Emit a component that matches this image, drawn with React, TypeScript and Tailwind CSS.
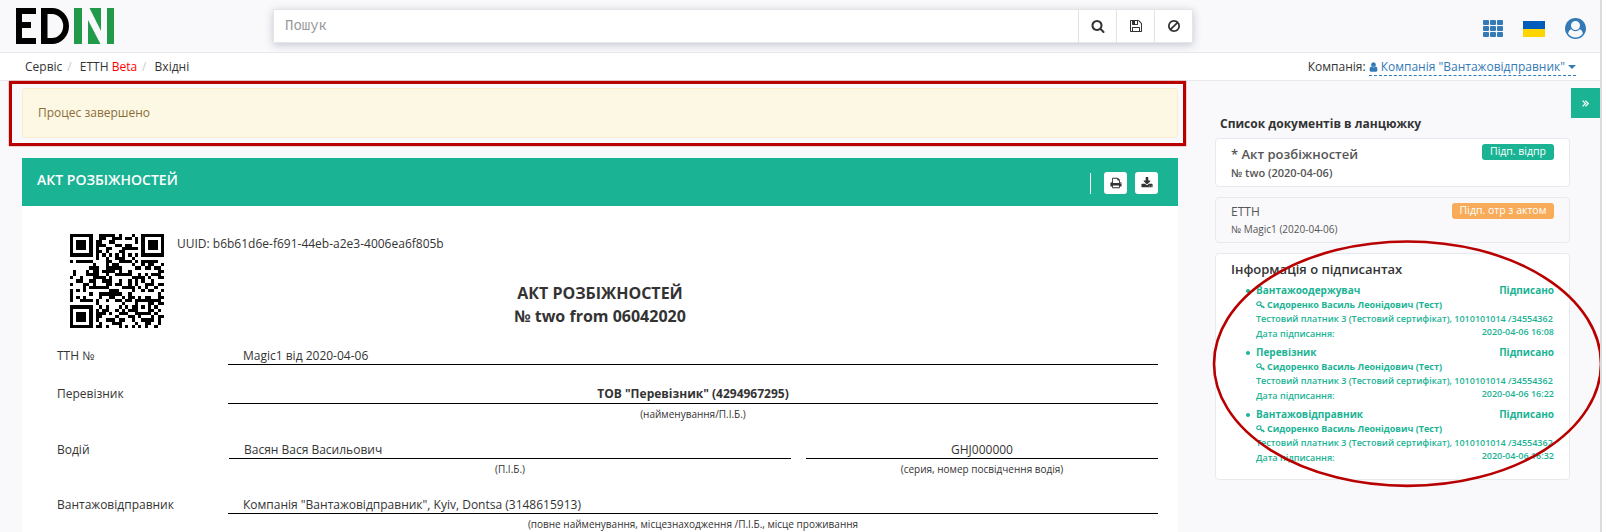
import React from "react";

/* ---------- QR code (version 3, level M, mask 2) ---------- */

const QR_SIZE = 29;
const DATA_WORDS = 44;
const EC_WORDS = 26;

function gfMultiply(a: number, b: number): number {
  let r = 0;
  for (let i = 7; i >= 0; i--) {
    r = (r << 1) ^ ((r >>> 7) * 0x11d);
    r ^= ((b >>> i) & 1) * a;
  }
  return r;
}

function errorWords(data: number[]): number[] {
  const divisor: number[] = new Array(EC_WORDS).fill(0);
  divisor[EC_WORDS - 1] = 1;
  let root = 1;
  for (let i = 0; i < EC_WORDS; i++) {
    for (let j = 0; j < EC_WORDS; j++) {
      divisor[j] = gfMultiply(divisor[j], root);
      if (j + 1 < EC_WORDS) divisor[j] ^= divisor[j + 1];
    }
    root = gfMultiply(root, 2);
  }
  const rest: number[] = new Array(EC_WORDS).fill(0);
  for (const b of data) {
    const factor = b ^ (rest.shift() as number);
    rest.push(0);
    divisor.forEach((c, i) => (rest[i] ^= gfMultiply(c, factor)));
  }
  return rest;
}

function buildQr(text: string): boolean[][] {
  const bits: number[] = [];
  const put = (v: number, n: number) => {
    for (let i = n - 1; i >= 0; i--) bits.push((v >>> i) & 1);
  };
  put(4, 4);
  put(text.length, 8);
  for (const ch of text) put(ch.charCodeAt(0), 8);
  put(0, 4);
  const words: number[] = [];
  for (let i = 0; i < bits.length; i += 8) words.push(parseInt(bits.slice(i, i + 8).join(""), 2));
  for (let pad = 0xec; words.length < DATA_WORDS; pad ^= 0xec ^ 0x11) words.push(pad);
  const all = words.concat(errorWords(words));

  const m = Array.from({ length: QR_SIZE }, () => new Array<boolean>(QR_SIZE).fill(false));
  const fixed = Array.from({ length: QR_SIZE }, () => new Array<boolean>(QR_SIZE).fill(false));
  const set = (r: number, c: number, v: boolean) => {
    if (r < 0 || c < 0 || r >= QR_SIZE || c >= QR_SIZE) return;
    m[r][c] = v;
    fixed[r][c] = true;
  };
  for (let i = 0; i < QR_SIZE; i++) {
    set(6, i, i % 2 === 0);
    set(i, 6, i % 2 === 0);
  }
  for (const [r, c] of [[3, 3], [3, QR_SIZE - 4], [QR_SIZE - 4, 3]]) {
    for (let dy = -4; dy <= 4; dy++)
      for (let dx = -4; dx <= 4; dx++) {
        const d = Math.max(Math.abs(dx), Math.abs(dy));
        set(r + dy, c + dx, d !== 2 && d !== 4);
      }
  }
  for (let dy = -2; dy <= 2; dy++)
    for (let dx = -2; dx <= 2; dx++) set(22 + dy, 22 + dx, Math.max(Math.abs(dx), Math.abs(dy)) !== 1);

  const format = 0b101111001111100;
  const bit = (i: number) => ((format >>> i) & 1) === 1;
  for (let i = 0; i <= 5; i++) set(i, 8, bit(i));
  set(7, 8, bit(6));
  set(8, 8, bit(7));
  set(8, 7, bit(8));
  for (let i = 9; i < 15; i++) set(8, 14 - i, bit(i));
  for (let i = 0; i < 8; i++) set(8, QR_SIZE - 1 - i, bit(i));
  for (let i = 8; i < 15; i++) set(QR_SIZE - 15 + i, 8, bit(i));
  set(QR_SIZE - 8, 8, true);

  let k = 0;
  for (let right = QR_SIZE - 1; right >= 1; right -= 2) {
    if (right === 6) right = 5;
    for (let v = 0; v < QR_SIZE; v++)
      for (let j = 0; j < 2; j++) {
        const c = right - j;
        const up = ((right + 1) & 2) === 0;
        const r = up ? QR_SIZE - 1 - v : v;
        if (fixed[r][c]) continue;
        const dark = k < all.length * 8 && ((all[k >>> 3] >>> (7 - (k & 7))) & 1) === 1;
        k++;
        m[r][c] = dark !== (c % 3 === 0);
      }
  }
  return m;
}

const UUID = "b6b61d6e-f691-44eb-a2e3-4006ea6f805b";

function QrCode() {
  const d = buildQr(UUID)
    .map((row, r) => row.map((on, c) => (on ? `M${c} ${r}h1v1h-1z` : "")).join(""))
    .join("");
  return (
    <svg className="h-[94px] w-[94px] shrink-0" viewBox="0 0 29 29" shapeRendering="crispEdges">
      <path d={d} />
    </svg>
  );
}

/* ---------- Icons ---------- */

const ICONS = {
  search:
    "M1216 832q0-185-131.5-316.5t-316.5-131.5-316.5 131.5-131.5 316.5 131.5 316.5 316.5 131.5 316.5-131.5 131.5-316.5zm512 832q0 52-38 90t-90 38q-54 0-90-38l-343-342q-179 124-399 124-143 0-273.5-55.5t-225-150-150-225-55.5-273.5 55.5-273.5 150-225 225-150 273.5-55.5 273.5 55.5 225 150 150 225 55.5 273.5q0 220-124 399l343 343q37 37 37 90z",
  save:
    "M512 1536h768v-384h-768v384zm896 0h128v-896q0-14-10-38.5t-20-34.5l-281-281q-10-10-34-20t-39-10v416q0 40-28 68t-68 28h-576q-40 0-68-28t-28-68v-416h-128v1280h128v-416q0-40 28-68t68-28h832q40 0 68 28t28 68v416zm-384-928v-320q0-13-9.5-22.5t-22.5-9.5h-192q-13 0-22.5 9.5t-9.5 22.5v320q0 13 9.5 22.5t22.5 9.5h192q13 0 22.5-9.5t9.5-22.5zm640 32v928q0 40-28 68t-68 28h-1344q-40 0-68-28t-28-68v-1344q0-40 28-68t68-28h928q40 0 88 20t76 48l280 280q28 28 48 76t20 88z",
  ban:
    "M1440 893q0-161-87-295l-754 753q137 89 297 89 111 0 211.5-43.5t173.5-116.5 116-174.5 43-212.5zm-999 299l755-754q-135-91-300-91-148 0-273 73t-198 199-73 274q0 162 89 299zm1223-299q0 157-61 300t-163.5 246-245 164-298.5 61-298.5-61-245-164-163.5-246-61-300 61-299.5 163.5-245.5 245-164 298.5-61 298.5 61 245 164 163.5 245.5 61 299.5z",
  print:
    "M448 1536h896v-256h-896v256zm0-640h896v-384h-160q-40 0-68-28t-28-68v-160h-640v640zm1152 64q0-26-19-45t-45-19-45 19-19 45 19 45 45 19 45-19 19-45zm128 0v416q0 13-9.5 22.5t-22.5 9.5h-224v160q0 40-28 68t-68 28h-960q-40 0-68-28t-28-68v-160h-224q-13 0-22.5-9.5t-9.5-22.5v-416q0-79 56.5-135.5t135.5-56.5h64v-544q0-40 28-68t68-28h672q40 0 88 20t76 48l152 152q28 28 48 76t20 88v256h64q79 0 135.5 56.5t56.5 135.5z",
  download:
    "M1344 1344q0-26-19-45t-45-19-45 19-19 45 19 45 45 19 45-19 19-45zm256 0q0-26-19-45t-45-19-45 19-19 45 19 45 45 19 45-19 19-45zm128-224v320q0 40-28 68t-68 28h-1472q-40 0-68-28t-28-68v-320q0-40 28-68t68-28h465l135 136q58 56 136 56t136-56l136-136h464q40 0 68 28t28 68zm-325-569q17 41-14 70l-448 448q-18 19-45 19t-45-19l-448-448q-31-29-14-70 17-39 59-39h256v-448q0-26 19-45t45-19h256q26 0 45 19t19 45v448h256q42 0 59 39z",
  user:
    "M1536 1399q0 109-62.5 187t-150.5 78h-854q-88 0-150.5-78t-62.5-187q0-85 8.5-160.5t31.5-152 58.5-131 94-89 134.5-34.5q131 128 313 128t313-128q76 0 134.5 34.5t94 89 58.5 131 31.5 152 8.5 160.5zm-256-887q0 159-112.5 271.5t-271.5 112.5-271.5-112.5-112.5-271.5 112.5-271.5 271.5-112.5 271.5 112.5 112.5 271.5z",
  userCircle:
    "M1523 1339q-22-155-87.5-257.5t-184.5-118.5q-67 74-159.5 115.5t-195.5 41.5-195.5-41.5-159.5-115.5q-119 16-184.5 118.5t-87.5 257.5q106 150 271 237.5t356 87.5 356-87.5 271-237.5zm-243-699q0-159-112.5-271.5t-271.5-112.5-271.5 112.5-112.5 271.5 112.5 271.5 271.5 112.5 271.5-112.5 112.5-271.5zm512 256q0 182-71 347.5t-190.5 286-285.5 191.5-349 71q-182 0-348-71t-286-191-191-286-71-348 71-348 191-286 286-191 348-71 348 71 286 191 191 286 71 348z",
};

function Icon({ name, className }: { name: keyof typeof ICONS; className: string }) {
  return (
    <svg viewBox="0 0 1792 1792" fill="currentColor" className={className}>
      <path d={ICONS[name]} />
    </svg>
  );
}

function Logo() {
  return (
    <svg className="ml-4 mt-2 h-9 w-[98px] shrink-0" viewBox="0 0 98 36">
      <path d="M0 0h20v6H6v8h9v6H6v10h14v6H0z" />
      <path fillRule="evenodd" d="M25 0h11a17 18 0 0 1 0 36H25zM31.500 6v24H36a11.200 12 0 0 0 0-24z" />
      <path fill="#219b49" d="M58 0h8v36h-8zM73.500 0H85v23zM72 12l12.500 24H72zM91 0h7v36h-7z" />
    </svg>
  );
}

function GridIcon() {
  return (
    <svg className="h-[17px] w-[21px]" viewBox="0 0 21 17" fill="#337ab7">
      {[0, 6, 12].map((y) =>
        [0, 7, 14].map((x) => <rect key={`${x}-${y}`} x={x} y={y} width="6" height="5" rx="1" />),
      )}
    </svg>
  );
}

function KeyIcon() {
  return (
    <svg className="mr-[2px] h-2 w-[9px]" viewBox="0 0 9 8" fill="none" stroke="#1ab394" strokeWidth="1.100">
      <ellipse cx="2.900" cy="2.600" rx="2.200" ry="1.700" transform="rotate(-25 2.900 2.600)" />
      <path d="M4.200 3.800l4 3.200M6 5.200L5.200 6.400M7.300 4.800v1.400h1.400" />
    </svg>
  );
}

/* ---------- Header ---------- */

function Header() {
  return (
    <header className="flex h-[53px] items-start border-b border-[#e7eaec]">
      <Logo />
      <div className="ml-[159px] mt-[9px] flex h-[34px] w-[920px] border border-[#e5e6e7] bg-white shadow-[0_2px_8px_rgba(60,70,100,0.28)]">
        <div className="flex flex-1 items-center pl-[11px] font-['Liberation_Mono',monospace] text-[14px] text-[#999]">
          Пошук
        </div>
        {(["search", "save", "ban"] as const).map((n) => (
          <div
            key={n}
            className="flex w-[38px] items-center justify-center border-l border-[#e0e2e4] text-[#333]"
          >
            <Icon name={n} className="h-[14px] w-[14px]" />
          </div>
        ))}
      </div>
      <div className="ml-auto mr-[14px] mt-[18px] flex items-center">
        <GridIcon />
        <div className="ml-[19px] flex h-[17px] w-[22px] flex-col pt-px">
          <div className="h-2 bg-[#005bbb]" />
          <div className="h-2 bg-[#ffd500]" />
        </div>
        <Icon name="userCircle" className="ml-5 h-[21px] w-[21px] text-[#337ab7]" />
      </div>
    </header>
  );
}

function Breadcrumbs() {
  return (
    <nav className="flex h-7 items-center border-b border-[#e7eaec] bg-white pl-[25px] pr-[24px] text-[12px] text-[#333]">
      <span>Сервіс</span>
      <span className="w-[17.5px] pl-[5px] text-[#ccc]">/</span>
      <span>
        ЕТТН <span className="text-[#f00]">Beta</span>
      </span>
      <span className="w-[17.5px] pl-[5px] text-[#ccc]">/</span>
      <span>Вхідні</span>
      <div className="ml-auto flex items-center">
        <span className="mr-[3px]">Компанія:</span>
        <span className="mt-px flex h-[18px] items-center border-b border-dashed border-[#337ab7] text-[#337ab7]">
          <Icon name="user" className="-ml-px mr-[2px] h-3 w-[11px]" />
          Компанія "Вантажовідправник"
          <span className="ml-[3px] h-0 w-0 border-x-4 border-t-4 border-x-transparent border-t-[#337ab7]" />
        </span>
      </div>
    </nav>
  );
}

/* ---------- Document ---------- */

function Row({ label, height, children }: { label: string; height: string; children: React.ReactNode }) {
  return (
    <div className={`flex ${height}`}>
      <div className="w-[171px] shrink-0 leading-4">{label}</div>
      <div className="flex flex-1 gap-[15px]">{children}</div>
    </div>
  );
}

function Field({
  value,
  caption,
  className = "",
  valueClass = "pl-[15px]",
}: {
  value: string;
  caption?: string;
  className?: string;
  valueClass?: string;
}) {
  return (
    <div className={`whitespace-nowrap ${className}`}>
      <div className={`border-b border-black leading-4 ${valueClass}`}>{value}</div>
      {caption && <div className="mt-[3px] text-center text-[10px] leading-[14px]">{caption}</div>}
    </div>
  );
}

function Document() {
  return (
    <section className="mt-5 w-[1156px] bg-white text-[12px] text-[#333]">
      <div className="flex h-12 items-start bg-[#1ab394] pl-[15px] pr-5 pt-[14px] text-white">
        <h2 className="mt-[-1px] text-[14px] font-semibold leading-[18px]">АКТ РОЗБІЖНОСТЕЙ</h2>
        <div className="ml-auto mt-px h-[21px] w-px bg-white" />
        <div className="ml-[13px] flex h-[22px] w-[23px] items-center justify-center rounded-[3px] bg-white text-[#333]">
          <Icon name="print" className="h-3 w-3" />
        </div>
        <div className="ml-2 flex h-[22px] w-[23px] items-center justify-center rounded-[3px] bg-white text-[#333]">
          <Icon name="download" className="h-3 w-3" />
        </div>
      </div>
      <div className="flex h-[76px] pl-12 pt-7">
        <QrCode />
        <div className="ml-[13px] mt-[2px] leading-4">UUID: {UUID}</div>
      </div>
      <h3 className="text-center text-[16px] font-bold leading-[23px]">
        АКТ РОЗБІЖНОСТЕЙ
        <br />№ two from 06042020
      </h3>
      <div className="pl-[35px] pr-5 pt-5">
        <Row label="ТТН №" height="h-[38px]">
          <Field value="Magic1 від 2020-04-06" className="flex-1" />
        </Row>
        <Row label="Перевізник" height="h-[56px]">
          <Field
            value='ТОВ "Перевізник" (4294967295)'
            caption="(найменування/П.І.Б.)"
            className="flex-1"
            valueClass="pb-px text-center font-bold"
          />
        </Row>
        <Row label="Водій" height="h-[55px]">
          <Field value="Васян Вася Васильович" caption="(П.І.Б.)" className="ml-px w-[562px]" />
          <Field
            value="GHJ000000"
            caption="(серия, номер посвідчення водія)"
            className="flex-1"
            valueClass="text-center"
          />
        </Row>
        <Row label="Вантажовідправник" height="h-[35px]">
          <Field
            value='Компанія "Вантажовідправник", Kyiv, Dontsa (3148615913)'
            caption="(повне найменування, місцезнаходження /П.І.Б., місце проживання"
            className="flex-1"
          />
        </Row>
      </div>
    </section>
  );
}

/* ---------- Sidebar ---------- */

const SIGNERS = [
  { role: "Вантажоодержувач", date: "2020-04-06 16:08" },
  { role: "Перевізник", date: "2020-04-06 16:22" },
  { role: "Вантажовідправник", date: "2020-04-06 16:32" },
];

function Signer({ role, date }: { role: string; date: string }) {
  return (
    <li className="h-[62px] whitespace-nowrap text-[9px] font-semibold text-[#1ab394]">
      <div className="flex h-[15px] items-center text-[10px] font-bold">
        <span className="-ml-[10px] mr-[6px] h-1 w-1 rounded-full bg-[#1ab394]" />
        <span>{role}</span>
        <span className="ml-auto">Підписано</span>
      </div>
      <div className="flex h-[14px] items-center font-bold">
        <KeyIcon />
        Сидоренко Василь Леонідович (Тест)
      </div>
      <div className="h-[14px] leading-[14px]">Тестовий платник 3 (Тестовий сертифікат), 1010101014 /34554362</div>
      <div className="flex h-[14px] justify-between leading-[14px]">
        <span className="pt-px">Дата підписання:</span>
        <span className="-mt-px">{date}</span>
      </div>
    </li>
  );
}

function Sidebar() {
  return (
    <aside className="ml-[37px] w-[355px] pt-[35px]">
      <h4 className="pl-[5px] text-[12px] font-bold leading-4 text-[#333]">Список документів в ланцюжку</h4>
      <div className="mt-[6px] flex h-[49px] justify-between rounded-[4px] border border-[#e7eaec] bg-white px-[15px] pt-[5px] text-[#555]">
        <div className="font-semibold">
          <div className="text-[13px] leading-5">* Акт розбіжностей</div>
          <div className="text-[11px] leading-[17px]">№ two (2020-04-06)</div>
        </div>
        <span className="flex h-4 w-[72px] items-center justify-center rounded-[3px] bg-[#1ab394] text-[10.5px] text-white">
          Підп. відпр
        </span>
      </div>
      <div className="mt-[10px] flex h-[46px] justify-between rounded-[4px] border border-[#e7eaec] px-[15px] pt-[5px] text-[#555]">
        <div>
          <div className="text-[12px] leading-[18px]">ЕТТН</div>
          <div className="text-[10px] leading-4">№ Magic1 (2020-04-06)</div>
        </div>
        <span className="flex h-4 w-[102px] items-center justify-center rounded-[3px] bg-[#f8ac59] text-[10.5px] text-white">
          Підп. отр з актом
        </span>
      </div>
      <div className="mt-[10px] h-[227px] rounded-[4px] border border-[#e7eaec] bg-white px-[15px] pt-[5px]">
        <h4 className="text-[13px] font-semibold leading-5 text-[#333]">Інформація о підписантах</h4>
        <ul className="pl-[25px] pt-1">
          {SIGNERS.map((s) => (
            <Signer key={s.role} {...s} />
          ))}
        </ul>
      </div>
    </aside>
  );
}

export default function App() {
  return (
    <div className="relative h-[532px] w-[1602px] overflow-hidden border-r-2 border-[#dcdcdc] bg-[#f9f9fb] font-['Open_Sans','Noto_Sans',sans-serif]">
      <Header />
      <Breadcrumbs />
      <main className="flex pl-[22px]">
        <div className="w-[1156px] pt-[7px]">
          <div className="flex h-[50px] items-center rounded-[4px] border border-[#faebcc] bg-[#fcf8e3] pl-[15px] text-[12px] text-[#8a6d3b]">
            Процес завершено
          </div>
          <Document />
        </div>
        <Sidebar />
        <div className="ml-px mt-[7px] flex h-[30px] w-[29px] items-center justify-center bg-[#1ab394]">
          <svg className="h-[7px] w-[7px]" viewBox="0 0 7 7" fill="none" stroke="#fff" strokeWidth="1.300">
            <path d="M.6.6l2.900 2.900L.6 6.400M3.400.6l2.900 2.900-2.900 2.900" />
          </svg>
        </div>
      </main>
      <div className="absolute left-[9px] top-[81px] h-[65px] w-[1177px] border-[3px] border-[#b80000] shadow-[0_0_1px_#b80000]" />
      <svg className="absolute left-[1212px] top-[239px] h-[250px] w-[392px]" viewBox="0 0 392 250" fill="none">
        <ellipse cx="195.500" cy="124.700" rx="193.500" ry="122.200" stroke="#b80000" strokeWidth="2.600" />
      </svg>
    </div>
  );
}
